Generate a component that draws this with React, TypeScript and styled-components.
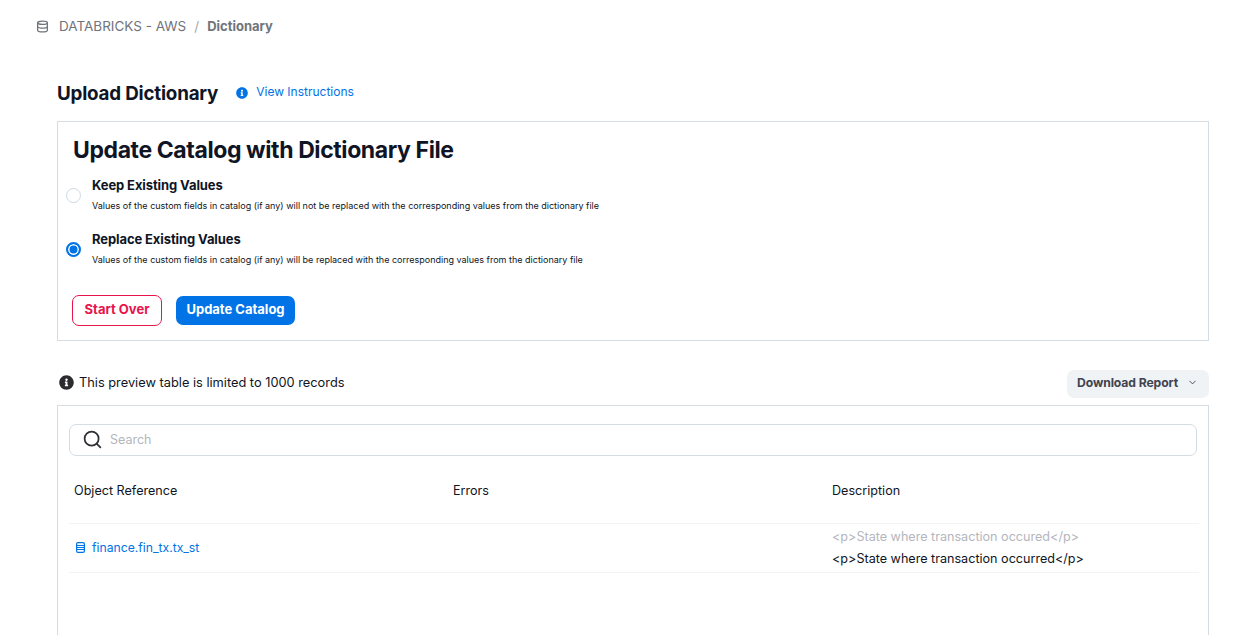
import styled, { createGlobalStyle } from 'styled-components';
import { FaInfoCircle } from 'react-icons/fa';
import { FiChevronDown, FiDatabase, FiSearch } from 'react-icons/fi';

const GlobalStyle = createGlobalStyle`
  html, body {
    margin: 0;
    height: 635px;
    overflow: hidden;
    background: #fff;
    font-family: Inter, "Liberation Sans", sans-serif;
    color: #0f1524;
  }
`;

function TableIcon() {
  return (
    <svg width="9" height="11" viewBox="0 0 9 11" fill="none">
      <rect x="0.6" y="0.6" width="7.8" height="9.8" rx="1.4" stroke="#0073e6" strokeWidth="1.2" />
      <path d="M1 3.5H8M1 5.5H8M1 7.5H8" stroke="#0073e6" strokeWidth="1.1" />
    </svg>
  );
}

export default function App() {
  return (
    <Page>
      <GlobalStyle />
      <Breadcrumb>
        <FiDatabase size={13} strokeWidth={2.4} />
        <Crumb>DATABRICKS - AWS</Crumb>
        <Slash>/</Slash>
        <CrumbCurrent>Dictionary</CrumbCurrent>
      </Breadcrumb>

      <Content>
        <TitleRow>
          <PageTitle>Upload Dictionary</PageTitle>
          <InstructionsLink>
            <FaInfoCircle size={12} />
            <span>View Instructions</span>
          </InstructionsLink>
        </TitleRow>

        <UpdatePanel>
          <PanelTitle>Update Catalog with Dictionary File</PanelTitle>
          <RadioOption>
            <Radio />
            <div>
              <OptionLabel>Keep Existing Values</OptionLabel>
              <OptionHint>
                Values of the custom fields in catalog (if any) will not be replaced with the corresponding values from the dictionary file
              </OptionHint>
            </div>
          </RadioOption>
          <RadioOption>
            <Radio $checked />
            <div>
              <OptionLabel>Replace Existing Values</OptionLabel>
              <OptionHint>
                Values of the custom fields in catalog (if any) will be replaced with the corresponding values from the dictionary file
              </OptionHint>
            </div>
          </RadioOption>
          <Actions>
            <OutlineButton>Start Over</OutlineButton>
            <PrimaryButton>Update Catalog</PrimaryButton>
          </Actions>
        </UpdatePanel>

        <PreviewBar>
          <PreviewNote>
            <FaInfoCircle size={15} color="#2b2b2f" />
            <span>This preview table is limited to 1000 records</span>
          </PreviewNote>
          <DownloadButton>
            Download Report
            <FiChevronDown size={11} />
          </DownloadButton>
        </PreviewBar>

        <TablePanel>
          <SearchBox>
            <FiSearch size={21} color="#2f3033" />
            <SearchInput placeholder="Search" />
          </SearchBox>
          <HeaderRow>
            <div>Object Reference</div>
            <div>Errors</div>
            <div>Description</div>
          </HeaderRow>
          <DataRow>
            <ObjectLink>
              <TableIcon />
              <span>finance.fin_tx.tx_st</span>
            </ObjectLink>
            <div />
            <div>
              <OldValue>&lt;p&gt;State where transaction occured&lt;/p&gt;</OldValue>
              <NewValue>&lt;p&gt;State where transaction occurred&lt;/p&gt;</NewValue>
            </div>
          </DataRow>
        </TablePanel>
      </Content>
    </Page>
  );
}

const Page = styled.div`
  height: 635px;
  overflow: hidden;
`;

const Breadcrumb = styled.nav`
  display: flex;
  align-items: center;
  height: 20px;
  padding: 16px 0 0 36px;
  font-size: 13.5px;
  color: #70747c;

  svg {
    margin-right: 10px;
  }
`;

const Crumb = styled.span``;

const Slash = styled.span`
  margin: 0 8px;
  color: #a4a7ad;
`;

const CrumbCurrent = styled.span`
  font-size: 13px;
  font-weight: 700;
`;

const Content = styled.main`
  width: 1152px;
  margin-left: 57px;
`;

const TitleRow = styled.div`
  display: flex;
  align-items: center;
  height: 30px;
  margin-top: 42px;
`;

const PageTitle = styled.h1`
  margin: 0;
  font-size: 18.8px;
  font-weight: 700;
  letter-spacing: -0.2px;
`;

const InstructionsLink = styled.a`
  display: flex;
  align-items: center;
  gap: 8px;
  margin-left: 18px;
  font-size: 12px;
  color: #0073e6;

  span {
    margin-top: -3px;
  }
`;

const UpdatePanel = styled.section`
  box-sizing: border-box;
  height: 220px;
  margin-top: 13px;
  padding: 14px 15px 0;
  border: 1px solid #d3dde3;
`;

const PanelTitle = styled.h2`
  margin: 0 0 9px;
  font-size: 23px;
  line-height: 28px;
  font-weight: 700;
  letter-spacing: -0.4px;
`;

const RadioOption = styled.div`
  display: flex;
  align-items: center;
  gap: 11px;
  height: 41px;
  margin-bottom: 13px;
  margin-left: -7px;
`;

const Radio = styled.span<{ $checked?: boolean }>`
  box-sizing: border-box;
  flex: none;
  width: 15px;
  height: 15px;
  margin-top: 3px;
  border-radius: 50%;
  border: ${(props) => (props.$checked ? '2px solid #0073e6' : '1px solid #cfd9df')};
  background: ${(props) => (props.$checked ? '#0073e6' : '#fff')};
  box-shadow: ${(props) => (props.$checked ? 'inset 0 0 0 1.5px #fff' : 'none')};
`;

const OptionLabel = styled.div`
  font-size: 13px;
  line-height: 18px;
  font-weight: 700;
  letter-spacing: -0.1px;
`;

const OptionHint = styled.div`
  margin-top: 6px;
  font-size: 9px;
  line-height: 12px;
`;

const Actions = styled.div`
  display: flex;
  align-items: center;
  gap: 14px;
  margin-top: 27px;
  margin-left: -1px;
`;

const OutlineButton = styled.button`
  box-sizing: border-box;
  height: 31px;
  width: 90px;
  padding: 0 0 3px;
  font: 700 13px Inter, sans-serif;
  color: #e8144c;
  background: #fff;
  border: 1px solid #e8144c;
  border-radius: 7px;
`;

const PrimaryButton = styled.button`
  box-sizing: border-box;
  height: 29px;
  width: 119px;
  padding: 0 0 3px;
  font: 700 13px Inter, sans-serif;
  color: #fff;
  background: #0073e6;
  border: 0;
  border-radius: 7px;
`;

const PreviewBar = styled.div`
  display: flex;
  align-items: center;
  justify-content: space-between;
  height: 28px;
  margin-top: 29px;
`;

const PreviewNote = styled.div`
  display: flex;
  align-items: center;
  gap: 5px;
  margin-left: 2px;
  margin-top: -3px;
  font-size: 12.8px;
`;

const DownloadButton = styled.button`
  display: flex;
  align-items: center;
  justify-content: space-between;
  box-sizing: border-box;
  width: 142px;
  height: 28px;
  padding: 0 11px 3px 10px;
  font: 700 12.2px Inter, sans-serif;
  letter-spacing: -0.1px;
  color: #3f4450;
  background: #f0f3f6;
  border: 0;
  border-radius: 7px;
`;

const TablePanel = styled.section`
  box-sizing: border-box;
  height: 300px;
  margin-top: 7px;
  padding: 18px 11px 0;
  border: 1px solid #d3dde3;
`;

const SearchBox = styled.div`
  display: flex;
  align-items: center;
  gap: 7px;
  box-sizing: border-box;
  height: 32px;
  padding: 0 12px 2px;
  border: 1px solid #d3dde3;
  border-radius: 7px;
`;

const SearchInput = styled.input`
  flex: 1;
  border: 0;
  outline: 0;
  padding: 0;
  font: 12.5px Inter, sans-serif;

  &::placeholder {
    color: #b3b6bc;
  }
`;

const TableGrid = styled.div`
  display: grid;
  grid-template-columns: 379px 379px 1fr;
  padding-left: 5px;
  width: 1130px;
  box-sizing: border-box;
  font-size: 12.6px;
`;

const HeaderRow = styled(TableGrid)`
  align-items: center;
  height: 68px;
  padding-top: 2px;
  border-bottom: 1px solid #f2f4f6;
`;

const DataRow = styled(TableGrid)`
  align-items: center;
  height: 49px;
  border-bottom: 1px solid #f2f4f6;
`;

const ObjectLink = styled.a`
  display: flex;
  align-items: center;
  gap: 7px;
  margin: -2px 0 0 2px;
  font-size: 12.2px;
  color: #0073e6;
`;

const OldValue = styled.div`
  line-height: 22px;
  color: #b4b6bd;
`;

const NewValue = styled.div`
  line-height: 22px;
  color: #0f1524;
`;
